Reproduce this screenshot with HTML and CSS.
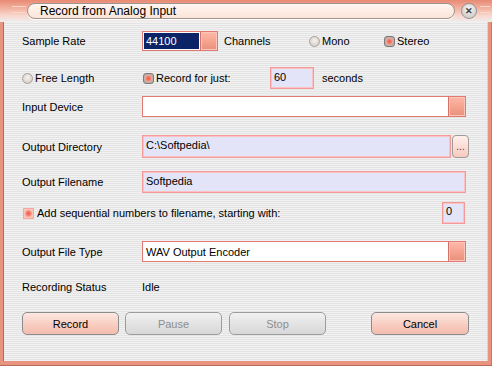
FILE: index.html
```html
<!DOCTYPE html>
<html lang="en">
<head>
    <meta charset="UTF-8">
    <title>Record from Analog Input</title>
    <link rel="stylesheet" href="styles.css">
</head>
<body>
    <div class="window">
        <div class="titlebar">
            <span class="deco deco-left"></span>
            <div class="title-pill">Record from Analog Input</div>
            <div class="close-btn">&#x2715;</div>
            <span class="deco deco-right"></span>
        </div>
        <div class="client">
            <div class="row row-rate">
                <div class="label">Sample Rate</div>
                <div class="combo combo-rate">
                    <div class="field field-selected">44100</div>
                    <div class="drop"></div>
                </div>
                <div class="channels">Channels</div>
                <div class="option option-mono"><span class="radio"></span>Mono</div>
                <div class="option"><span class="radio radio-on"></span>Stereo</div>
            </div>
            <div class="row row-length">
                <div class="option option-free"><span class="radio"></span>Free Length</div>
                <div class="option option-just"><span class="radio radio-on"></span>Record for just:</div>
                <div class="edit edit-secs">60</div>
                <div class="unit">seconds</div>
            </div>
            <div class="row row-device">
                <div class="label">Input Device</div>
                <div class="combo combo-wide">
                    <div class="field"></div>
                    <div class="drop"></div>
                </div>
            </div>
            <div class="row row-dir">
                <div class="label">Output Directory</div>
                <div class="edit edit-dir">C:\Softpedia\</div>
                <div class="browse">...</div>
            </div>
            <div class="row row-name">
                <div class="label">Output Filename</div>
                <div class="edit edit-name">Softpedia</div>
            </div>
            <div class="row row-seq">
                <span class="check"></span>
                <div class="seq-text">Add sequential numbers to filename, starting with:</div>
                <div class="edit edit-num">0</div>
            </div>
            <div class="row row-type">
                <div class="label">Output File Type</div>
                <div class="combo combo-wide">
                    <div class="field">WAV Output Encoder</div>
                    <div class="drop"></div>
                </div>
            </div>
            <div class="row row-status">
                <div class="label">Recording Status</div>
                <div>Idle</div>
            </div>
            <div class="row row-buttons">
                <div class="btn">Record</div>
                <div class="btn btn-off btn-pause">Pause</div>
                <div class="btn btn-off btn-stop">Stop</div>
                <div class="btn btn-cancel">Cancel</div>
            </div>
        </div>
    </div>
</body>
</html>
```

FILE: styles.css
```css
body {
    margin: 0;
    font-family: "Liberation Sans", Arial, sans-serif;
    font-size: 11px;
    color: #000;
}
.window {
    width: 492px;
    height: 366px;
    box-sizing: border-box;
    display: flex;
    flex-direction: column;
    background: #e9947f;
    padding: 0 4px 5px 3px;
    box-shadow: inset 0 -1px 0 #b86a58, inset -1px 0 0 #c47a68;
}
.titlebar {
    height: 22px;
    margin: 0 -4px 0 -3px;
    display: flex;
    align-items: center;
    position: relative;
    background: linear-gradient(#e88a74 0, #f2ae9c 35%, #f9d6cc 70%, #eeeeee 100%);
}
.deco {
    position: absolute;
    top: 6px;
    width: 14px;
    height: 5px;
    border-top: 1px solid #fbd6cc;
    border-bottom: 1px solid #fbd6cc;
}
.deco-left {
    left: 12px;
}
.deco-right {
    right: 2px;
    width: 10px;
}
.title-pill {
    margin-left: 27px;
    width: 428px;
    height: 16px;
    box-sizing: border-box;
    border: 1px solid #9c9490;
    border-radius: 8px;
    background: linear-gradient(#fff6f1, #fbe4d8);
    padding-left: 12px;
    font-size: 12px;
    line-height: 14px;
    box-shadow: 0 1px 0 #fff;
}
.close-btn {
    margin-left: 6px;
    width: 16px;
    height: 16px;
    box-sizing: border-box;
    border: 1px solid #9a9694;
    border-radius: 50%;
    background: radial-gradient(circle at 50% 35%, #f6f6f6, #c4c0be);
    font-size: 9px;
    font-weight: bold;
    color: #3a3a3a;
    display: flex;
    align-items: center;
    justify-content: center;
    position: relative;
    z-index: 1;
}
.client {
    flex: 1;
    display: flex;
    flex-direction: column;
    border-left: 1px solid #8c7670;
    border-right: 1px solid #d8d4d2;
    padding: 9px 21px 0 18px;
    background: repeating-linear-gradient(#f1f1f1 0, #f1f1f1 1px, #e4e4e4 1px, #e4e4e4 2px);
}
.row {
    display: flex;
    align-items: center;
    flex-shrink: 0;
}
.label {
    width: 120px;
    flex-shrink: 0;
}
.row-rate { height: 20px; margin-top: 0; }
.row-length { height: 22px; margin-top: 16px; }
.row-device { height: 21px; margin-top: 7px; }
.row-dir { height: 23px; margin-top: 18px; }
.row-name { height: 22px; margin-top: 13px; }
.row-seq { height: 22px; margin-top: 9px; }
.row-type { height: 21px; margin-top: 17px; }
.row-status { height: 20px; margin-top: 15px; }
.row-buttons { height: 23px; margin-top: 15px; }

.combo {
    display: flex;
    height: 100%;
    box-sizing: border-box;
    border: 1px solid #e07a72;
    background: #fff;
}
.combo-rate {
    width: 76px;
}
.combo-wide {
    width: 324px;
}
.field {
    flex: 1;
    padding-left: 3px;
    display: flex;
    align-items: center;
    background: #fff;
    font-size: 11px;
}
.field-selected {
    background: #0b2468;
    color: #fff;
    border: 1px solid #fff;
    padding-left: 2px;
}
.drop {
    width: 16px;
    border-left: 1px solid #d87068;
    box-shadow: inset 0 0 0 1px #fbc6ba;
    background: linear-gradient(#ffb8a8, #f3a08c 60%, #e8907a);
}
.channels {
    margin-left: 6px;
    width: 85px;
}
.option {
    display: flex;
    align-items: center;
}
.option-mono {
    width: 75px;
}
.option-free {
    width: 120px;
}
.option-just {
    width: 127px;
    margin-left: 1px;
}
.radio {
    width: 11px;
    height: 11px;
    box-sizing: border-box;
    margin-right: 2px;
    border: 1px solid #a8a29e;
    border-radius: 50%;
    background: radial-gradient(circle at 50% 40%, #f6f2ee, #cfc6be);
}
.radio-on {
    border-radius: 3px;
    border-color: #7e7a76;
    background: radial-gradient(circle, #f45c48 0, #f47a66 2px, #e0a89c 3px, #b8aeaa 5px);
}
.check {
    width: 11px;
    height: 11px;
    box-sizing: border-box;
    margin: 0 3px 0 1px;
    border: 1px solid #f6a89c;
    background: radial-gradient(circle, #f05c4c 0, #f47c6c 2px, #fcc4b8 4px);
}
.edit {
    height: 100%;
    box-sizing: border-box;
    border: 1px solid #f29a98;
    box-shadow: inset 0 0 0 1px #fcc2c2;
    background: #e4e4f8;
    padding: 3px 0 0 3px;
    font-size: 11px;
}
.edit-secs {
    width: 44px;
}
.unit {
    margin-left: 8px;
}
.edit-dir {
    width: 309px;
    flex-shrink: 0;
}
.edit-name {
    width: 324px;
}
.edit-num {
    width: 23px;
    margin-left: auto;
    margin-right: 1px;
    padding-top: 2px;
}
.browse {
    width: 17px;
    height: 100%;
    flex-shrink: 0;
    margin-left: 1px;
    box-sizing: border-box;
    border: 1px solid #a09a98;
    border-radius: 4px;
    background: linear-gradient(#fff0ec, #f8cabe);
    color: #802040;
    font-size: 10px;
    display: flex;
    align-items: center;
    justify-content: center;
    line-height: 1;
}
.seq-text {
    flex-shrink: 0;
}
.btn {
    width: 97px;
    height: 100%;
    box-sizing: border-box;
    border: 1px solid #8c8c8c;
    border-radius: 5px;
    background: linear-gradient(#fde8e2, #f8cdc0 55%, #f3bdae);
    display: flex;
    align-items: center;
    justify-content: center;
    font-size: 11px;
    flex-shrink: 0;
}
.btn-off {
    color: #8e8e8e;
    border-color: #9c9c9c;
    background: linear-gradient(#f2f2f2, #e2e2e2 55%, #d8d8d8);
}
.btn-pause {
    margin-left: 6px;
}
.btn-stop {
    margin-left: 7px;
}
.btn-cancel {
    margin-left: auto;
    margin-right: -3px;
    width: 98px;
}
```
